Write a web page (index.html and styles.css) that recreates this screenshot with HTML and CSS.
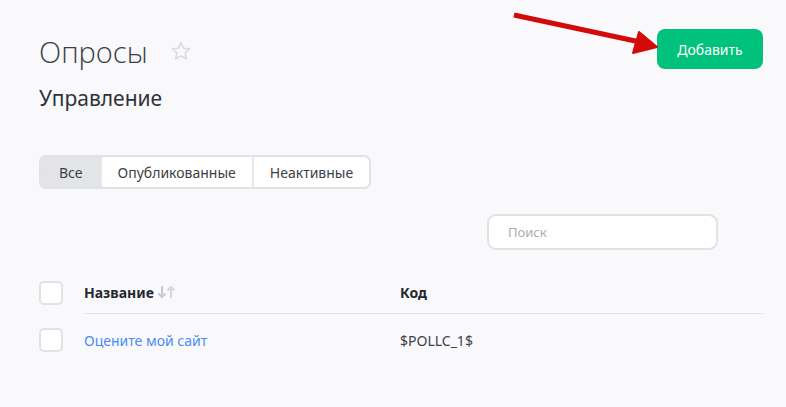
FILE: index.html
```html
<!DOCTYPE html>
<html lang="ru">
<head>
<meta charset="utf-8">
<link rel="stylesheet" href="styles.css">
</head>
<body>
<div class="page">
  <header class="head">
    <div class="titles">
      <div class="title-row">
        <h1 class="title">Опросы</h1>
        <svg class="star" width="22" height="22" viewBox="0 0 24 24"><path d="M12 2.8l2.8 6.1 6.6.7-4.9 4.5 1.4 6.5L12 17.3l-5.9 3.3 1.4-6.5-4.9-4.5 6.6-.7z" fill="none" stroke="#d8dadf" stroke-width="1.7" stroke-linejoin="round"/></svg>
      </div>
      <h2 class="subtitle">Управление</h2>
    </div>
    <button class="add">Добавить</button>
  </header>

  <div class="tabs">
    <span class="tab active">Все</span>
    <span class="tab">Опубликованные</span>
    <span class="tab">Неактивные</span>
  </div>

  <div class="search-row">
    <div class="search">Поиск</div>
  </div>

  <div class="table">
    <div class="row header">
      <span class="check"></span>
      <div class="cells head-cells">
        <span class="cell name">Название <svg class="sort" width="20" height="14" viewBox="0 0 20 14"><path d="M5 1v11M1.5 8.5L5 12l3.5-3.5" fill="none" stroke="#c9cbd0" stroke-width="2"/><path d="M14 13V2M10.5 5.5L14 2l3.5 3.5" fill="none" stroke="#d5d7db" stroke-width="2"/></svg></span>
        <span class="cell code">Код</span>
      </div>
    </div>
    <div class="row">
      <span class="check"></span>
      <div class="cells">
        <span class="cell name link">Оцените мой сайт</span>
        <span class="cell code">$POLLC_1$</span>
      </div>
    </div>
  </div>

  <svg class="arrow" width="160" height="45" viewBox="0 0 160 45"><line x1="2" y1="3" x2="128" y2="30" stroke="#d40a0a" stroke-width="5"/><polygon points="145,35 121,41 127,20" fill="#d40a0a" stroke="#d40a0a" stroke-width="2" stroke-linejoin="round"/></svg>
</div>
</body>
</html>
```

FILE: styles.css
```css
* { box-sizing: border-box; }
html, body { margin: 0; padding: 0; }
body {
  background: #f9f9fb;
  font-family: "Noto Sans", "Open Sans", sans-serif;
  color: #3b3f47;
  width: 786px;
  height: 407px;
  overflow: hidden;
}
.page {
  position: relative;
  padding: 29px 23px 0 39px;
}
.head {
  display: flex;
  justify-content: space-between;
  align-items: flex-start;
}
.title-row {
  display: flex;
  align-items: center;
  gap: 22px;
  margin-top: 4px;
}
.title {
  margin: 0;
  font-family: "Open Sans", "Noto Sans", sans-serif;
  font-weight: 300;
  font-size: 29px;
  line-height: 38px;
  color: #3a3f48;
}
.star { margin-top: -2px; }
.subtitle {
  margin: 14px 0 0;
  font-weight: 400;
  font-size: 21px;
  line-height: 27px;
  color: #2f333a;
}
.add {
  width: 106px;
  height: 40px;
  border: 0;
  border-radius: 8px;
  background: #00c27c;
  color: #fff;
  font-family: "Noto Sans", sans-serif;
  font-size: 14px;
  padding: 0;
}
.tabs {
  display: inline-flex;
  margin-top: 43px;
  height: 34px;
  border: 2px solid #e1e2e6;
  border-radius: 7px;
  background: #fff;
  overflow: hidden;
}
.tab {
  display: flex;
  align-items: center;
  padding: 0 16px;
  font-size: 14px;
  color: #3b3f47;
  border-left: 2px solid #e6e7ea;
}
.tab:first-child { border-left: 0; padding: 0 17px 0 18px; }
.tab.active { background: #e3e4e8; }
.search-row {
  display: flex;
  justify-content: flex-end;
  margin-top: 25px;
  padding-right: 45px;
}
.search {
  width: 231px;
  height: 36px;
  border: 2px solid #e1e2e6;
  border-radius: 9px;
  background: #fff;
  padding-left: 19px;
  font-size: 13px;
  line-height: 32px;
  color: #a8acb4;
}
.table { margin-top: 31px; }
.row {
  display: flex;
  align-items: center;
  gap: 21px;
}
.row + .row { margin-top: 14px; }
.check {
  width: 24px;
  height: 24px;
  border: 2px solid #e1e2e6;
  border-radius: 5px;
  background: #fff;
  flex: none;
}
.cells {
  flex: 1;
  display: flex;
  align-items: center;
  height: 24px;
}
.head-cells {
  height: 44px;
  align-self: flex-start;
  margin-top: -11px;
  border-bottom: 1px solid #e3e4e7;
  padding-top: 1px;
}
.cell { font-size: 14px; }
.name { width: 316px; display: flex; align-items: center; gap: 3px; }
.header .cell { font-weight: 700; color: #25282e; }
.link { color: #4a8cf6; }
.code { color: #3b3f47; }
.header { align-items: flex-start; }
.arrow {
  position: absolute;
  left: 512px;
  top: 12px;
}
```
